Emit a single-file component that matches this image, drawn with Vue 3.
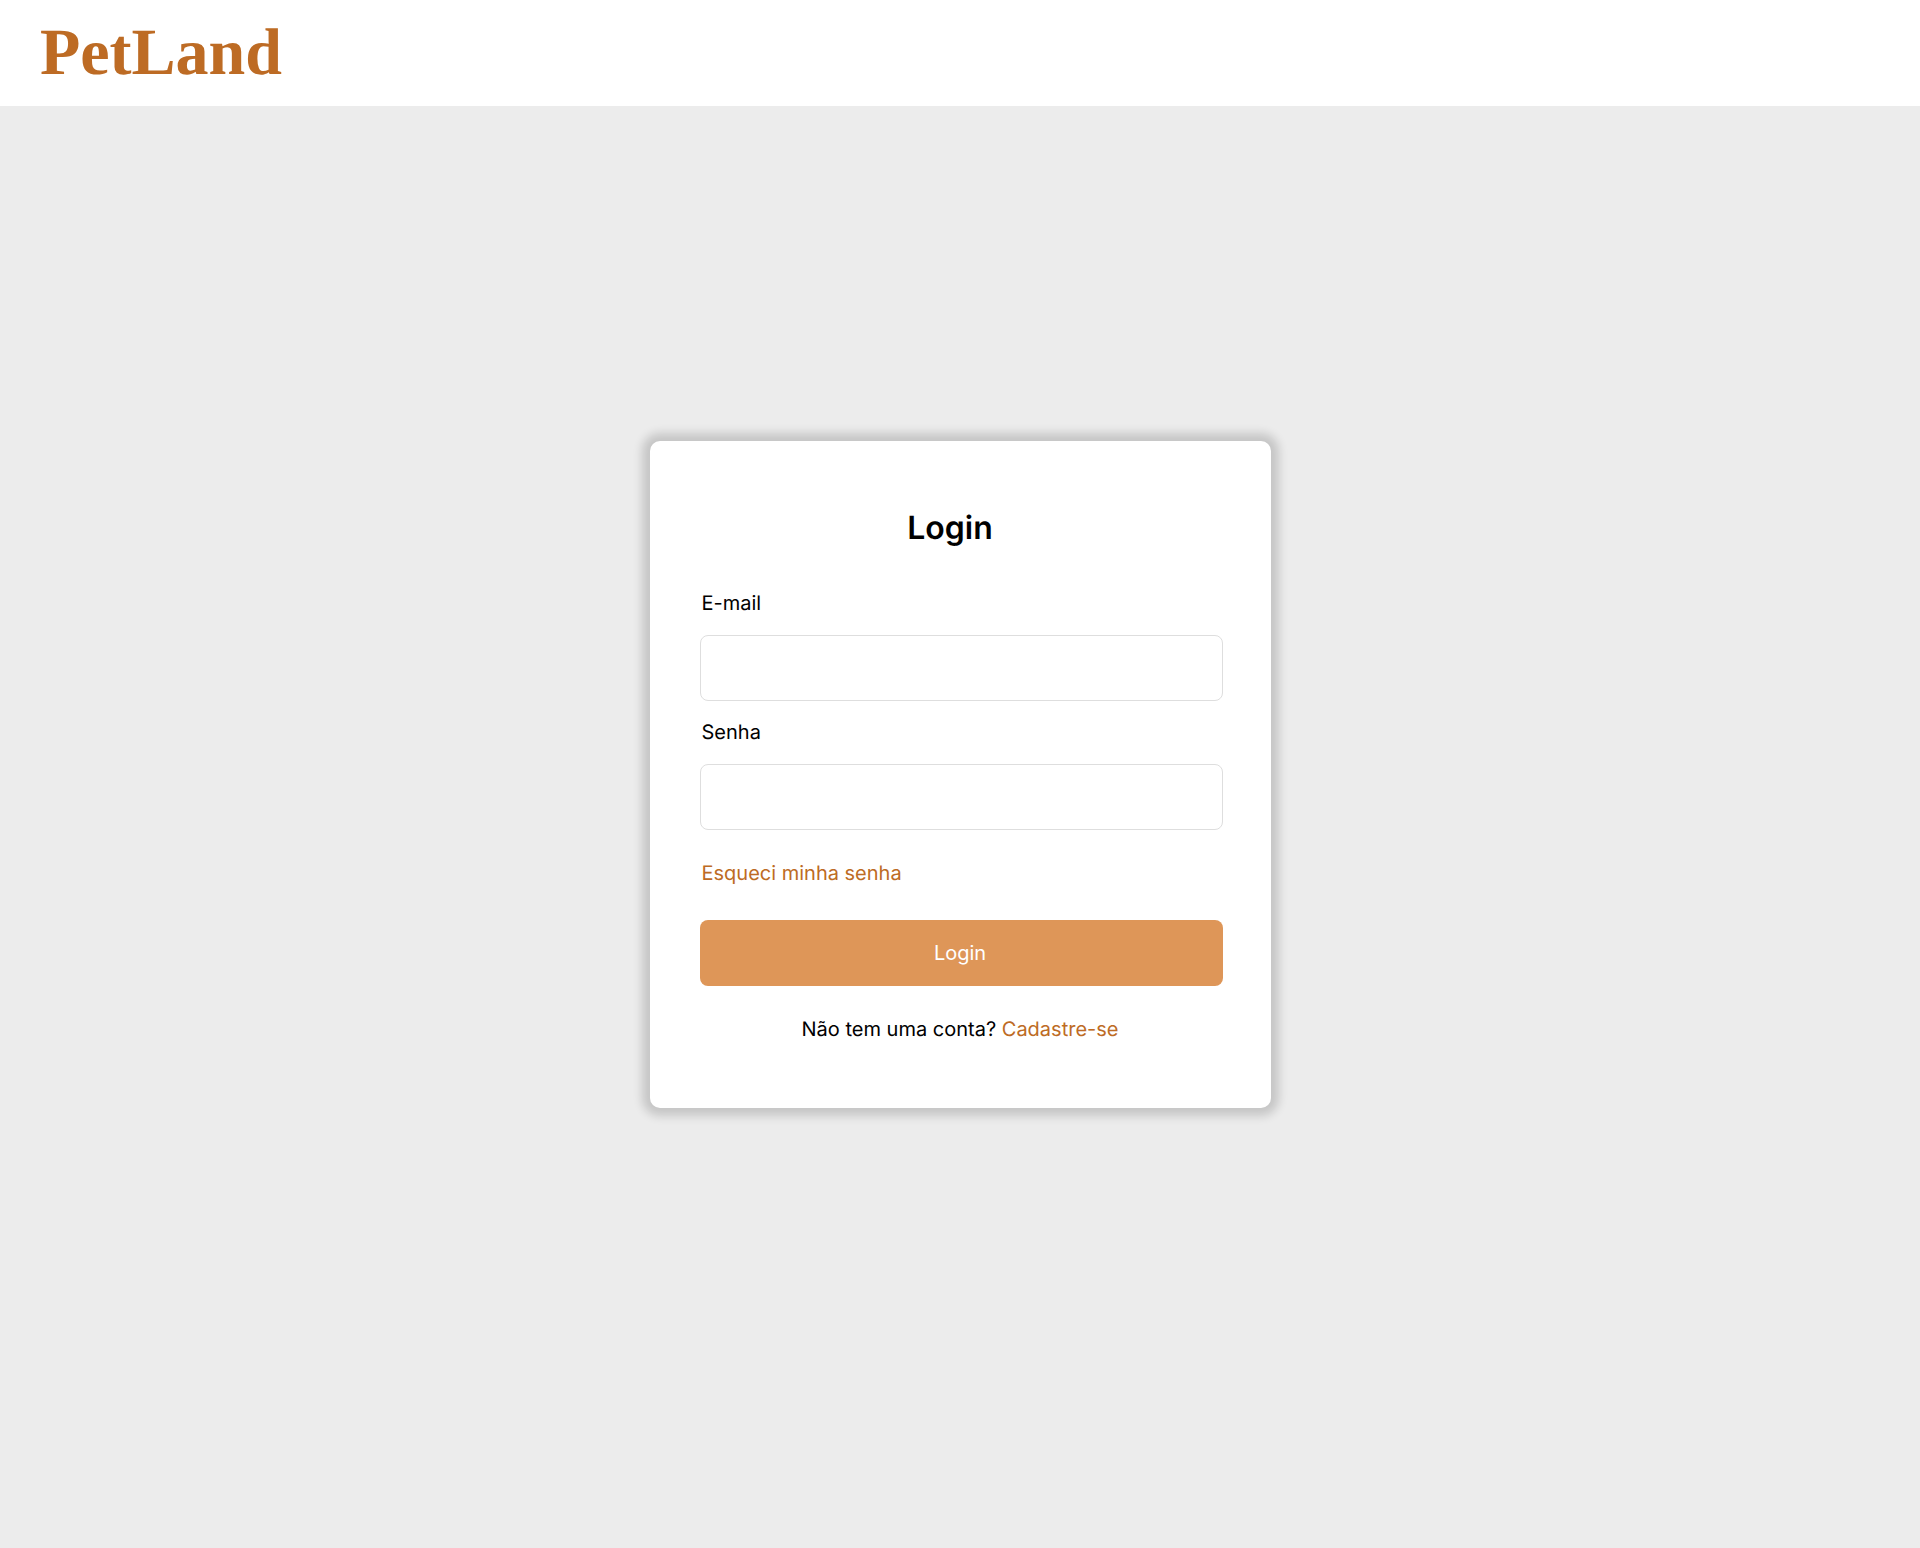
<script setup>
import { ref } from 'vue'

const email = ref('')
const senha = ref('')
</script>

<template>
  <div class="page">
    <header class="topbar">
      <a class="brand" href="#">PetLand</a>
    </header>

    <main class="content">
      <form class="card" @submit.prevent>
        <h1 class="title">Login</h1>

        <div class="field">
          <label class="label" for="email">E-mail</label>
          <input id="email" v-model="email" class="input" type="email" autocomplete="email" />
        </div>

        <div class="field">
          <label class="label" for="senha">Senha</label>
          <input id="senha" v-model="senha" class="input" type="password" autocomplete="current-password" />
        </div>

        <a class="link forgot" href="#">Esqueci minha senha</a>

        <button class="submit" type="submit">Login</button>

        <p class="signup">Não tem uma conta? <a class="link" href="#">Cadastre-se</a></p>
      </form>
    </main>
  </div>
</template>

<style>
body {
  margin: 0;
}
</style>

<style scoped>
.page {
  --bar: 106px;
  display: flex;
  flex-direction: column;
  min-height: 100vh;
  background: #ececec;
  color: #000;
  font-family: Inter, "Liberation Sans", sans-serif;
  font-size: 20px;
  line-height: 24px;
  text-rendering: geometricPrecision;
}

.topbar {
  display: flex;
  align-items: center;
  box-sizing: border-box;
  height: var(--bar);
  padding: 0 40px;
  background: #fff;
}

.brand {
  color: #bd6b24;
  font-family: "Liberation Serif", serif;
  font-size: 66px;
  font-weight: 700;
  line-height: 72px;
  text-decoration: none;
}

.content {
  display: flex;
  flex: 1;
  align-items: center;
  justify-content: center;
  padding-bottom: var(--bar);
}

.card {
  display: flex;
  flex-direction: column;
  box-sizing: border-box;
  width: 100%;
  max-width: 621px;
  padding: 67px 48px 67px 50px;
  border-radius: 10px;
  background: #fff;
  box-shadow: 0 0 10px 8px rgba(0, 0, 0, 0.16);
}

.title {
  margin: 0 22px 43px 0;
  font-size: 32px;
  font-weight: 600;
  line-height: 40px;
  text-align: center;
}

.field {
  display: flex;
  flex-direction: column;
  gap: 20px;
}

.field + .field {
  margin-top: 19px;
}

.label,
.forgot {
  align-self: flex-start;
  margin-left: 2px;
}

.input {
  box-sizing: border-box;
  width: 100%;
  height: 66px;
  padding: 0 16px;
  border: 1px solid #dedede;
  border-radius: 8px;
  background: #fff;
  color: inherit;
  font: inherit;
}

.link {
  color: #bd6b24;
  text-decoration: none;
}

.forgot {
  margin-top: 31px;
}

.submit {
  height: 66px;
  margin-top: 35px;
  padding: 0 2px 0 0;
  border: 0;
  border-radius: 8px;
  background: #de9658;
  color: #fff;
  font: inherit;
  cursor: pointer;
}

.signup {
  margin: 31px 0 0;
  padding-right: 2px;
  text-align: center;
}
</style>
